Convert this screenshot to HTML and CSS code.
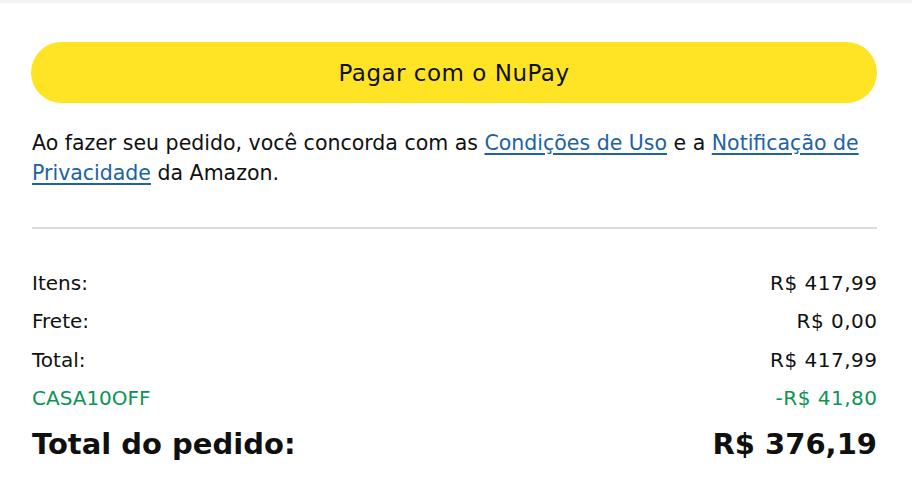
FILE: index.html
```html
<!DOCTYPE html>
<html lang="pt-BR">
<head>
<meta charset="utf-8">
<link rel="stylesheet" href="styles.css">
</head>
<body>
<div class="topbar"></div>
<main class="panel">
  <button class="pay-btn">Pagar com o NuPay</button>
  <p class="terms">Ao fazer seu pedido, você concorda com as <a href="#">Condições de Uso</a> e a <a href="#">Notificação de Privacidade</a> da Amazon.</p>
  <hr class="divider">
  <div class="summary">
    <div class="row"><span>Itens:</span><span class="val">R$ 417,99</span></div>
    <div class="row"><span>Frete:</span><span class="val">R$ 0,00</span></div>
    <div class="row"><span>Total:</span><span class="val">R$ 417,99</span></div>
    <div class="row promo"><span>CASA10OFF</span><span class="val">-R$ 41,80</span></div>
    <div class="row grand"><span>Total do pedido:</span><span>R$ 376,19</span></div>
  </div>
</main>
</body>
</html>
```
FILE: styles.css
```css
html, body {
  margin: 0;
  padding: 0;
  background: #fff;
}
body {
  font-family: "DejaVu Sans", "Noto Sans", sans-serif;
  color: #0f1111;
}
.topbar {
  height: 3px;
  background: #f3f3f3;
}
.panel {
  padding: 39px 35px 0 31px;
}
.pay-btn {
  display: block;
  width: 100%;
  height: 61px;
  border: none;
  border-radius: 31px;
  background: #ffe426;
  font-family: inherit;
  font-size: 23px;
  letter-spacing: 0.5px;
  color: #0f1111;
  cursor: pointer;
}
.terms {
  margin: 25px 0 0 1px;
  font-size: 20.5px;
  line-height: 30px;
}
.terms a {
  color: #2162a1;
  text-decoration: underline;
  text-underline-offset: 3px;
}
.divider {
  margin: 39px 0 0 1px;
  border: none;
  height: 2px;
  background: #dddddd;
}
.summary {
  margin-top: 35px;
  padding-left: 1px;
}
.row {
  display: flex;
  justify-content: space-between;
  font-size: 20px;
  height: 38.3px;
  align-items: center;
}
.val {
  letter-spacing: 0.5px;
  margin-right: -0.5px;
}
.promo {
  color: #0b9455;
}
.grand {
  font-size: 29px;
  font-weight: 700;
  height: 54px;
}
```
